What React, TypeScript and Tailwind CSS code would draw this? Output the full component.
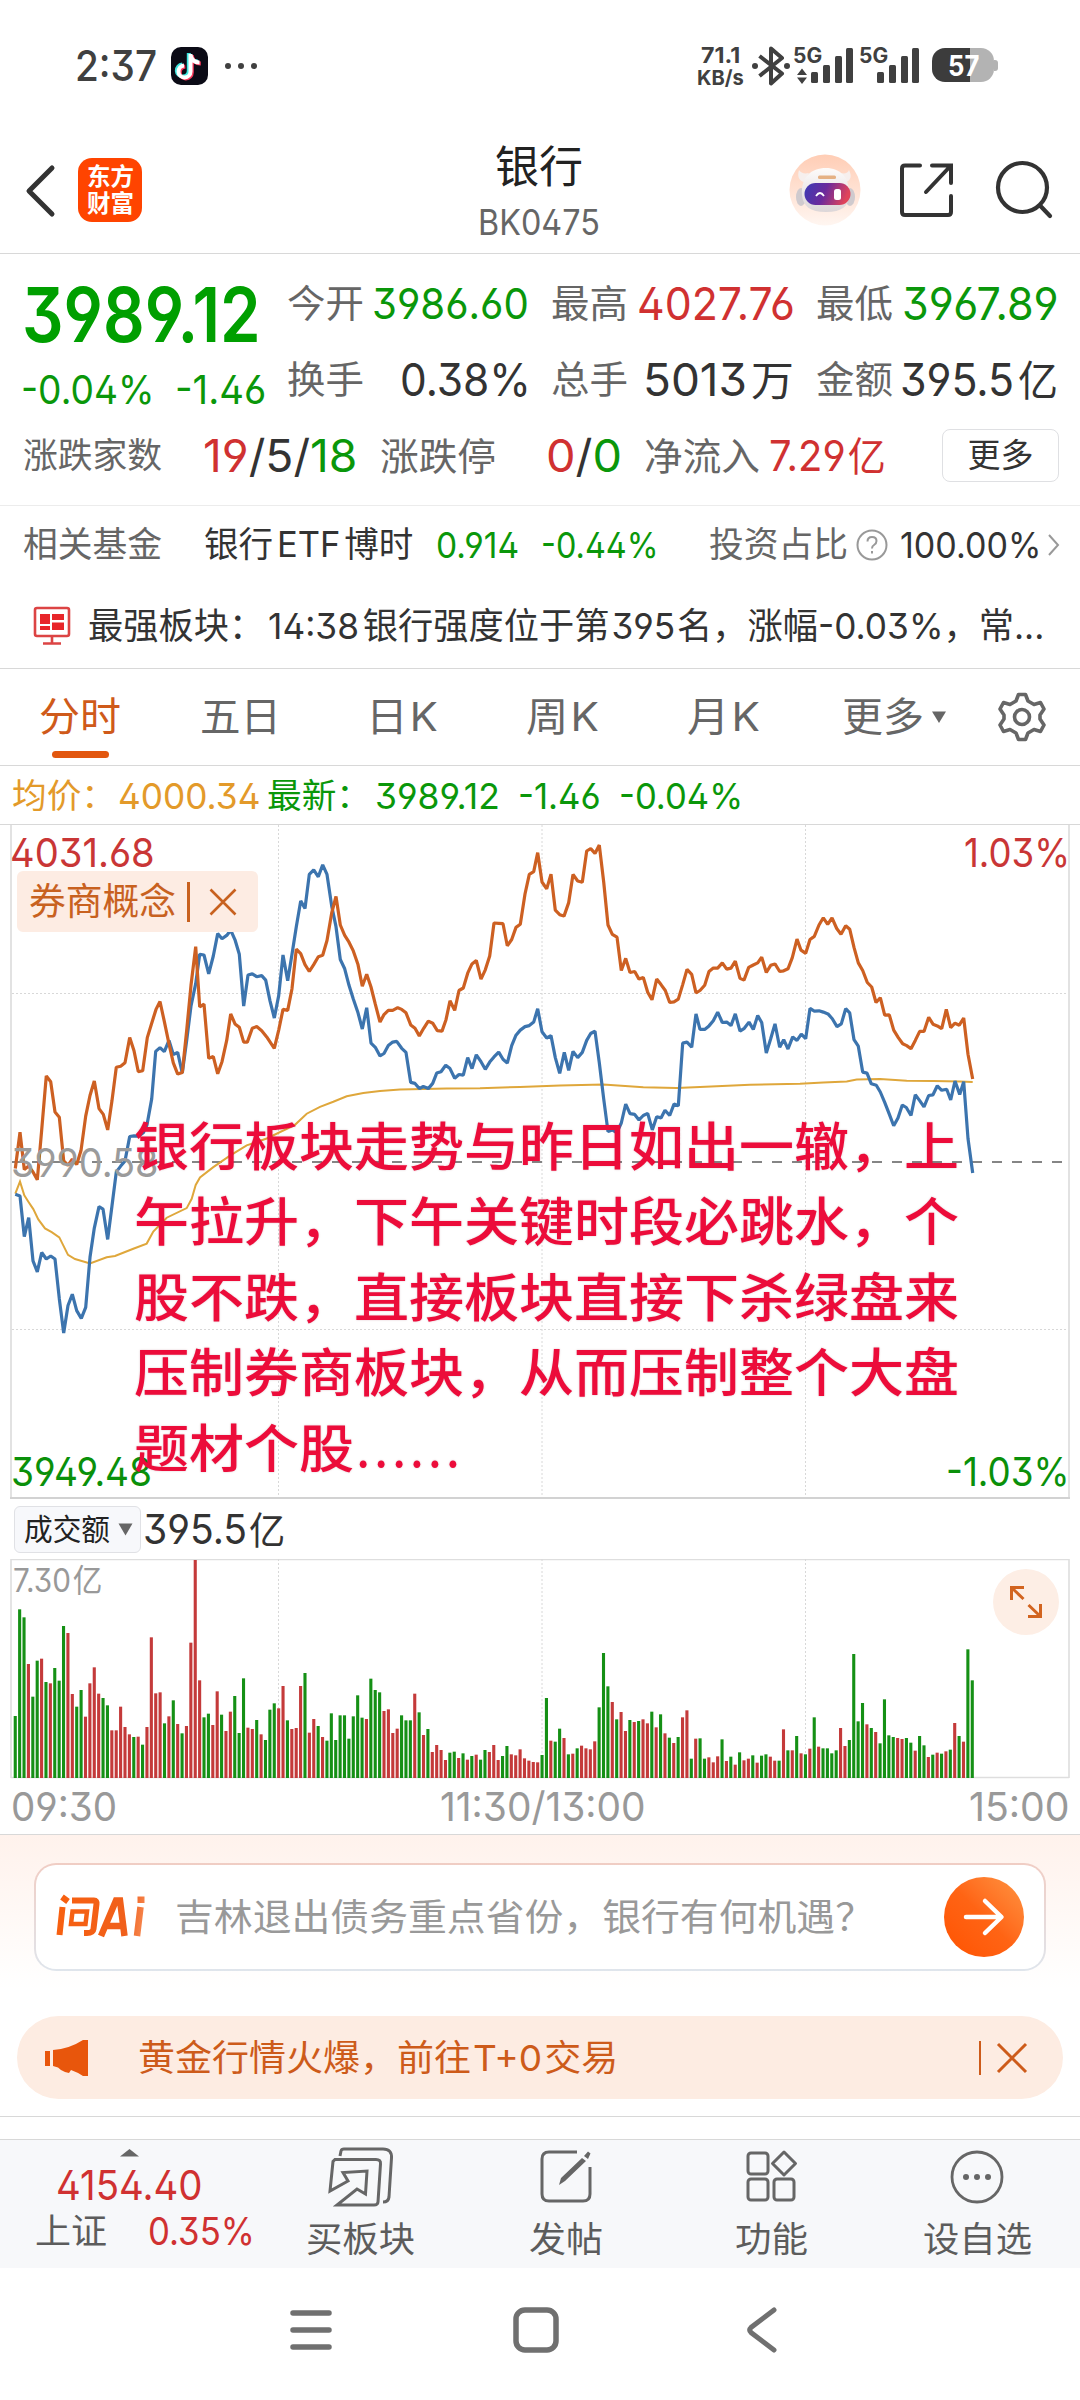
import { useLayoutEffect, useRef, type ReactNode } from "react";

/* Text squeezed or stretched horizontally so that it fills its box exactly. */
function Fit({ className, children }: { className: string; children: ReactNode }) {
  const box = useRef<HTMLSpanElement>(null);
  const text = useRef<HTMLSpanElement>(null);
  useLayoutEffect(() => {
    if (box.current && text.current) {
      const k = box.current.clientWidth / text.current.offsetWidth;
      text.current.style.transform = `scaleX(${k})`;
    }
  });
  return (
    <span ref={box} className={"block shrink-0 leading-none " + className}>
      <span ref={text} className="inline-block origin-left whitespace-nowrap align-top leading-none">
        {children}
      </span>
    </span>
  );
}

const BARS =
  "g1128 g808 g832 r972 g1070 g962 r956 g1026 r1030 g984 g1022 g858 r879 r1062 g1100 g1050 r1130 r1030 r982 r1061 g1074 g1096 r1171 r1171 r1100 r1161 r1183 g1191 r1190 g1214 r1161 r892 r1060 r1057 g1150 r1129 g1081 r1152 g1180 r1158 r908 r660 r1021 g1132 g1121 r1155 r1054 g1124 r1173 r1115 g1068 g1179 g1015 r1163 r1167 g1140 r1183 g1200 g1109 g1090 r1105 r1038 g1141 r1167 r1164 r1038 g999 r1178 r1137 g1158 r1191 g1202 g1120 g1200 g1126 g1126 g1196 g1129 g1066 g1133 r1137 g1016 g1050 g1057 r1113 r1108 r1179 r1166 g1126 g1141 g1141 r1061 g1117 r1185 g1167 r1236 r1215 r1230 r1260 g1238 g1235 r1254 g1240 r1259 g1248 r1244 g1259 g1230 r1236 r1215 r1260 g1248 g1218 r1243 r1246 r1228 r1255 r1262 r1266 r1267 " +
  "g1245 g1074 r1202 g1205 g1166 r1194 g1243 r1241 g1225 r1217 r1225 r1228 r1204 g1102 g939 g1039 r1086 g1138 r1116 r1173 g1140 r1146 g1143 r1138 r1150 g1115 r1162 g1123 r1180 g1193 r1209 g1191 r1132 r1111 g1256 r1196 g1195 g1256 r1252 r1267 r1249 g1198 r1263 g1250 r1274 g1237 r1261 r1256 g1246 r1268 g1247 g1243 r1250 r1262 g1262 r1168 g1231 r1231 g1188 r1240 g1243 r1226 g1132 r1220 g1225 g1225 g1240 g1231 r1164 r1218 g1200 g942 g1144 g1089 r1153 g1164 r1176 g1210 g1078 g1186 g1191 r1194 r1197 g1194 g1208 r1232 g1188 g1216 r1251 g1244 r1238 g1241 r1234 g1229 r1149 g1188 r1205 g928 g1021";

const BLUE: [number, string][] = [
  [0, "46,1087 60,1092 73,1210 86,1155 99,1280 112,1312 125,1256 139,1275 152,1266 165,1275 178,1390 191,1490 204,1410 217,1377 230,1425 244,1447 257,1415 270,1270 283,1185 297,1123 309,1130 323,1218 336,1120 349,1022 362,1005 375,990 389,919 402,917 415,918 430,908 441,885 455,810 467,672 480,661 493,673 507,640 520,681 533,675 547,735 560,640 573,540 587,475 599,390 612,392 626,447 640,395 653,330 666,345 680,335 692,320 705,348 718,390 731,540 744,450 757,447 770,455 785,452 797,465 810,525 823,575 836,510 849,392 863,467 876,390 889,310 902,235 915,257 928,158 941,145 955,165 968,130 981,158 995,250 1008,310 1021,405 1034,432 1047,480 1060,520 1074,560 1087,607 1100,545"],
  [1080, "33,648 46,660 60,685 72,678 85,655 98,645 110,643 125,663 138,675 152,762 165,765 178,780 190,774 205,780 218,765 230,735 243,731 257,712 270,722 284,750 297,739 310,741 323,690 336,722 349,682 363,702 376,724 389,703 402,688 416,674 429,695 442,706 455,655 468,625 481,610 495,600 508,597 521,587 533,548 546,615 560,633 573,626 586,690 599,736 613,675 626,727 639,672 653,690 667,675 680,640 692,620 705,613 718,705 731,810 744,905 757,900 770,908 784,880 797,825 810,853 824,855 837,871 850,858 863,852 877,900 890,862 903,865 915,843 929,858 942,825 955,830 968,648 981,645 995,660 1008,563"],
  [2100, "0,608 14,608 27,598 40,583 53,558 67,588 80,587 93,597 106,563 120,613 133,605 147,587 160,608 173,568 185,588 199,677 212,635 225,592 239,660 251,638 264,665 278,630 291,640 304,622 317,635 330,547 343,555 357,554 370,558 384,563 397,577 411,600 424,592 437,548 449,560 462,638 475,657 488,732 501,735 514,766 529,770 541,790 554,820 567,852 581,888 594,865 607,828 619,835 633,858 646,798 659,815 672,833 686,800 699,798 712,772 725,785 740,782 752,813 765,758 779,797 791,760 804,925 818,1025"],
];

const ORANGE: [number, string][] = [
  [0, "46,1012 60,907 73,1015 86,1005 99,1022 112,1045 125,900 139,743 152,760 165,848 178,863 191,990 204,1003 217,985 230,1000 243,960 257,860 270,800 283,758 297,838 310,855 323,900 336,815 349,718 362,715 375,705 389,632 402,670 415,731 428,728 442,632 455,590 468,550 480,527 493,585 507,650 520,705 533,738 547,733 560,610 573,480 587,368 599,543 612,535 626,692 640,687 653,737 666,702 680,640 692,563 705,592 718,602 731,645 742,645 757,605 770,600 785,612 800,630 823,663 836,610 849,550 863,553 876,490 889,375 902,388 915,420 928,440 941,420 955,397 968,393 981,350 995,270 1008,222 1021,305 1034,335 1047,355 1060,380 1074,420 1087,483 1100,448 1113,485 1126,535 1140,587"],
  [1080, "72,565 85,553 98,553 113,545 125,550 138,560 152,595 165,605 178,627 191,605 205,584 218,590 232,612 246,613 258,580 270,525 284,553 297,495 310,488 323,445 336,418 349,408 363,462 376,435 389,395 402,299 416,300 429,301 442,365 455,347 468,312 481,303 495,215 508,158 521,150 533,95 546,180 560,200 573,157 586,262 599,275 612,279 626,240 639,158 653,177 667,181 680,90 692,83 705,97 718,73 731,180 744,305 757,332 771,340 784,437 797,402 810,443 824,440 837,462 850,457 863,500 876,522 890,462 903,478 916,495 929,530 942,528 955,520 968,478 981,434 995,448 1008,502"],
  [2100, "0,495 14,480 27,440 40,430 53,430 67,415 80,433 93,430 106,410 120,460 132,465 146,428 160,421 173,415 185,398 199,443 212,422 225,418 239,440 251,438 264,432 277,400 291,346 303,378 317,387 330,347 343,338 357,305 370,284 383,303 396,284 410,315 423,332 437,307 449,317 462,370 475,415 488,437 502,472 515,485 528,530 541,516 554,567 568,566 581,610 595,632 608,650 620,655 633,664 646,640 659,614 672,614 686,573 699,593 712,598 725,606 739,550 752,603 765,590 778,596 791,575 804,680 818,752"],
];

const YELLOW: [number, string][] = [
  [0, "46,1085 60,1050 73,1090 86,1110 100,1130 115,1160 135,1186 155,1197 178,1212 204,1263 225,1275 270,1288 320,1270 345,1266 400,1245 440,1230 460,1195 500,1155 560,1127 575,1100 587,1060 600,1038 640,1008 690,975 740,945 800,925 885,885 920,853 960,833 1000,818 1040,802 1090,793 1140,787 1200,783"],
  [1080, "260,780 360,779 480,775 600,771 730,768 850,776 950,778"],
  [2100, "0,775 150,769 300,766 370,762 440,759 470,754 540,752 620,757 700,758 780,759 818,761"],
];

function toPoints(series: [number, string][]) {
  return series
    .flatMap(([dx, s]) =>
      s.split(" ").map((p) => {
        const [x, y] = p.split(",").map(Number);
        return `${((x + dx) / 3).toFixed(1)},${(y / 2.904 - 5).toFixed(1)}`;
      }),
    )
    .join(" ");
}

const GRID_X = [278.5, 542, 805.5];

function PriceChart() {
  return (
    <svg className="absolute inset-0" width="1080" height="675" viewBox="0 0 1080 675" fill="none">
      <g stroke="#d8d8d8" strokeDasharray="2 2">
        {GRID_X.map((x) => (
          <line key={x} x1={x} x2={x} y1="0" y2="673" />
        ))}
        <line x1="12" x2="1068" y1="168.500" y2="168.500" />
        <line x1="12" x2="1068" y1="504.500" y2="504.500" />
      </g>
      <path d="M11 0V673M1069 0V673" stroke="#e2e2e2" strokeWidth="2" />
      <path d="M10 673H1070" stroke="#d2d2d2" strokeWidth="2" />
      <path d="M12 337H1062" stroke="#858585" strokeWidth="2" strokeDasharray="10 10" />
      <polyline points={toPoints(YELLOW)} stroke="#dfa73b" strokeWidth="2" />
      <polyline points={toPoints(BLUE)} stroke="#3c74ae" strokeWidth="3.200" strokeLinejoin="bevel" />
      <polyline points={toPoints(ORANGE)} stroke="#cd6022" strokeWidth="3.200" strokeLinejoin="bevel" />
    </svg>
  );
}

function VolumeChart() {
  return (
    <svg className="absolute inset-0" width="1080" height="220" viewBox="0 0 1080 220" fill="none">
      <path d="M11 0V219M1069 0V219M11 0.5H1069M11 218.5H1069" stroke="#dedede" strokeWidth="1.6" />
      <g stroke="#d8d8d8" strokeDasharray="2 2">
        {GRID_X.map((x) => (
          <line key={x} x1={x} x2={x} y1="0" y2="218" />
        ))}
      </g>
      {BARS.split(" ").map((b, i) => {
        const top = (Number(b.slice(1)) - 657) / 3;
        return (
          <rect
            key={i}
            x={13.7 + i * 4.39}
            y={top}
            width="3.1"
            height={219 - top}
            fill={b[0] === "g" ? "#159015" : "#c43a3a"}
          />
        );
      })}
    </svg>
  );
}

function StatusBar() {
  return (
    <div className="flex h-[132px] items-center text-[#404040]">
      <Fit className="ml-[75px] w-[82px] text-[42px] font-medium">2:37</Fit>
      <svg className="ml-[14px]" width="37" height="38" viewBox="0 0 37 38">
        <rect width="37" height="38" rx="10" fill="#0b0b16" />
        <g fill="none" strokeWidth="4" strokeLinecap="butt">
          <path d="M19 7V24.5A6 6 0 1 1 12.5 18.5M19 8C20 13 23 15.500 28 15.500" stroke="#3ee6e0" transform="translate(-1.200 -1)" />
          <path d="M19 7V24.500A6 6 0 1 1 12.500 18.500M19 8C20 13 23 15.500 28 15.500" stroke="#fb3a5d" transform="translate(1.800 1)" />
          <path d="M19 7V24.500A6 6 0 1 1 12.500 18.500M19 8C20 13 23 15.500 28 15.500" stroke="#fff" transform="translate(.5 0)" />
        </g>
      </svg>
      <div className="ml-[17px] flex gap-[7px]">
        <i className="size-[6px] rounded-full bg-[#404040]" />
        <i className="size-[6px] rounded-full bg-[#404040]" />
        <i className="size-[6px] rounded-full bg-[#404040]" />
      </div>
      <div className="ml-[440px] flex flex-col items-center gap-[2px] font-bold">
        <Fit className="w-[39px] text-[22px]">71.1</Fit>
        <Fit className="w-[47px] text-[20.500px]">KB/s</Fit>
      </div>
      <svg className="ml-[7px]" width="40" height="42" viewBox="0 0 40 42" fill="none" stroke="#404040" strokeWidth="4" strokeLinejoin="round">
        <path d="M8.500 11L31 28.500L20 38.500V3.500L31 13L8.500 31" />
        <g fill="#404040" stroke="none">
          <circle cx="4" cy="21" r="3" />
          <circle cx="36" cy="21" r="3" />
        </g>
      </svg>
      <div className="relative ml-[2px] h-[42px] w-[60px]">
        <Fit className="absolute left-0 top-0 w-[29px] text-[21px] font-bold">5G</Fit>
        <svg width="60" height="42" viewBox="0 0 60 42" fill="#404040">
          <path d="M9 23.500L14 30H4ZM9 39L4 32.500H14Z" />
          <rect x="18" y="27" width="7" height="11" rx="1.500" />
          <rect x="30" y="20" width="7" height="18" rx="1.500" />
          <rect x="42" y="11" width="7" height="27" rx="1.500" />
          <rect x="53" y="3" width="7" height="35" rx="1.500" />
        </svg>
      </div>
      <div className="relative ml-[6px] h-[42px] w-[61px]">
        <Fit className="absolute left-0 top-0 w-[29px] text-[21px] font-bold">5G</Fit>
        <svg width="61" height="42" viewBox="0 0 61 42" fill="#404040">
          <rect x="18" y="27" width="7" height="11" rx="1.500" />
          <rect x="30" y="20" width="7" height="18" rx="1.500" />
          <rect x="42" y="11" width="7" height="27" rx="1.500" />
          <rect x="53" y="3" width="7" height="35" rx="1.500" />
        </svg>
      </div>
      <div className="relative -top-[1px] ml-[12px] flex items-center">
        <div className="flex h-[34px] w-[62px] items-center justify-center overflow-hidden rounded-[13px] bg-[linear-gradient(90deg,#3c3c3c_62%,#b3b3b3_62%)]">
          <Fit className="w-[31px] text-[29px] font-bold text-white">57</Fit>
        </div>
        <i className="h-[11px] w-[4px] rounded-r-[3px] bg-[#b3b3b3]" />
      </div>
    </div>
  );
}

function Header() {
  return (
    <header className="flex h-[122px] items-start border-b border-[#d8d8d8]">
      <svg className="ml-[24px] mt-[31px]" width="34" height="56" viewBox="0 0 34 56" fill="none" stroke="#333" strokeWidth="5" strokeLinecap="round" strokeLinejoin="round">
        <path d="M28 5L5 28L28 51" />
      </svg>
      <div className="ml-[20px] mt-[26px] flex size-[64px] flex-col items-center justify-center gap-[3px] rounded-[14px] bg-[#ff4400] font-bold text-white">
        <Fit className="w-[47px] text-[24px]">东方</Fit>
        <Fit className="w-[47px] text-[24px]">财富</Fit>
      </div>
      <div className="ml-[321px] mt-[13px] flex w-[164px] flex-col items-center pr-[12px]">
        <Fit className="w-[88px] text-[44px] text-[#222]">银行</Fit>
        <Fit className="ml-[-1px] mt-[16px] w-[122px] text-[35px] text-[#666]">BK0475</Fit>
      </div>
      <svg className="ml-[162px] mt-[22px]" width="72" height="72" viewBox="0 0 72 72">
        <defs>
          <linearGradient id="halo" x1="0" y1="0" x2="0" y2="1">
            <stop offset="0" stopColor="#ffcdb5" />
            <stop offset="1" stopColor="#fff6f1" />
          </linearGradient>
          <linearGradient id="visor" x1="0" y1="0" x2="1" y2="0.2">
            <stop offset="0" stopColor="#3b3bb5" />
            <stop offset="0.5" stopColor="#6b2a9c" />
            <stop offset="1" stopColor="#e0435a" />
          </linearGradient>
          <linearGradient id="shell" x1="0" y1="0" x2="0" y2="1">
            <stop offset="0" stopColor="#fdfbfa" />
            <stop offset="1" stopColor="#dcd6d8" />
          </linearGradient>
        </defs>
        <circle cx="36" cy="36" r="35.500" fill="url(#halo)" />
        <path d="M10 16C8 22 10 27 15 28L20 19C15 20 12 19 10 16ZM60 16C63 22 62 26 57 28L52 19C56 20 59 19 60 16Z" fill="#f6efed" />
        <ellipse cx="12" cy="43" rx="5" ry="9" fill="#cfcace" />
        <ellipse cx="61" cy="43" rx="5" ry="9" fill="#cfcace" />
        <path d="M13 41C12 23 22 14 37 14C51 14 61 23 60 41C60 52 53 58 37 58C21 58 14 52 13 41Z" fill="url(#shell)" />
        <rect x="29" y="21.500" width="18" height="3.500" rx="1.500" fill="#e5b184" />
        <rect x="15.500" y="29" width="46" height="22" rx="11" fill="url(#visor)" />
        <path d="M27 42Q31 36 35 42" fill="none" stroke="#fff" strokeWidth="1.800" />
        <rect x="45" y="35" width="7" height="11" rx="2.500" fill="#fff" />
      </svg>
      <svg className="ml-[37px] mt-[29px]" width="58" height="58" viewBox="0 0 58 58" fill="none" stroke="#333" strokeWidth="4" strokeLinecap="round">
        <path d="M22 4.500H7Q4 4.500 4 7.500V51Q4 54 7 54H50Q53 54 53 51V35M34 4.500H53V22M52 5.500L28 31" />
      </svg>
      <svg className="ml-[38px] mt-[28px]" width="60" height="60" viewBox="0 0 60 60" fill="none" stroke="#333" strokeWidth="4.200" strokeLinecap="round">
        <circle cx="28.500" cy="27.500" r="24.500" />
        <path d="M46 45.500L56 56" />
      </svg>
    </header>
  );
}

function Quote() {
  return (
    <section className="border-b border-[#ececec] pb-[11px] pt-[11px] text-[#666]">
      <div className="flex">
        <div className="w-[287px] text-[#0a970a]">
          <div className="flex h-[88px] items-center pt-[10px]">
            <Fit className="ml-[22px] w-[239px] text-[75px] font-semibold text-[#009f00]">3989.12</Fit>
          </div>
          <div className="flex h-[64px] items-center pt-[10px]">
            <Fit className="ml-[21px] w-[133px] text-[40px]">-0.04%</Fit>
            <Fit className="ml-[21px] w-[91px] text-[40px]">-1.46</Fit>
          </div>
        </div>
        <div>
          <div className="flex h-[76px] items-center">
            <Fit className="w-[77px] text-[38px]">今开</Fit>
            <Fit className="ml-[8px] w-[157px] text-[43px] text-[#0a970a]">3986.60</Fit>
            <Fit className="ml-[22px] w-[77px] text-[38px]">最高</Fit>
            <Fit className="ml-[9px] w-[158px] text-[45px] text-[#d03131]">4027.76</Fit>
            <Fit className="ml-[21px] w-[77px] text-[38px]">最低</Fit>
            <Fit className="ml-[9px] w-[157px] text-[45px] text-[#0a970a]">3967.89</Fit>
          </div>
          <div className="flex h-[76px] items-center">
            <Fit className="w-[77px] text-[38px]">换手</Fit>
            <Fit className="ml-[36px] w-[131px] text-[45px] text-[#333]">0.38%</Fit>
            <Fit className="ml-[20px] w-[77px] text-[38px]">总手</Fit>
            <Fit className="ml-[15px] w-[151px] text-[45px] text-[#333]">5013<span className="ml-1 text-[42px]">万</span></Fit>
            <Fit className="ml-[22px] w-[77px] text-[38px]">金额</Fit>
            <Fit className="ml-[7px] w-[158px] text-[45px] text-[#333]">395.5<span className="ml-1 text-[42px]">亿</span></Fit>
          </div>
        </div>
      </div>
      <div className="flex h-[77px] items-center">
        <Fit className="ml-[23px] w-[139px] text-[35px]">涨跌家数</Fit>
        <Fit className="ml-[41px] w-[154px] text-[45px] text-[#333]">
          <span className="text-[#d03131]">19</span>/5/<span className="text-[#0a970a]">18</span>
        </Fit>
        <Fit className="ml-[23px] w-[116px] text-[38px]">涨跌停</Fit>
        <Fit className="ml-[50px] w-[76px] text-[45px] text-[#333]">
          <span className="text-[#d03131]">0</span>/<span className="text-[#0a970a]">0</span>
        </Fit>
        <Fit className="ml-[22px] w-[116px] text-[38px]">净流入</Fit>
        <Fit className="ml-[9px] w-[117px] text-[42px] text-[#d03131]">7.29<span className="ml-0.5 text-[40px]">亿</span></Fit>
        <div className="ml-[56px] flex h-[53px] w-[117px] items-center justify-center rounded-lg border border-[#dfe0e3] text-[#333]">
          <Fit className="w-[66px] text-[33px]">更多</Fit>
        </div>
      </div>
    </section>
  );
}

function FundAndNews() {
  return (
    <section className="border-b border-[#d8d8d8] text-[#333]">
      <div className="flex h-[77px] items-center">
        <Fit className="ml-[23px] w-[139px] text-[35px] text-[#666]">相关基金</Fit>
        <Fit className="ml-[42px] w-[209px] text-[35px]">银行<span className="mx-1">ETF</span>博时</Fit>
        <Fit className="ml-[23px] w-[83px] text-[36px] text-[#0a970a]">0.914</Fit>
        <Fit className="ml-[22px] w-[118px] text-[36px] text-[#0a970a]">-0.44%</Fit>
        <Fit className="ml-[50px] w-[139px] text-[35px] text-[#666]">投资占比</Fit>
        <svg className="ml-[8px]" width="32" height="32" viewBox="0 0 32 32" fill="none" stroke="#999" strokeWidth="2">
          <circle cx="16" cy="16" r="14.500" />
          <path d="M11.500 12.500Q11.500 8 16 8Q20.500 8 20.500 12Q20.500 14.500 18 16Q16 17.200 16 19.500M16 22V24.500" />
        </svg>
        <Fit className="ml-[12px] w-[141px] text-[36px]">100.00%</Fit>
        <svg className="ml-[6px]" width="14" height="24" viewBox="0 0 14 24" fill="none" stroke="#999" strokeWidth="2">
          <path d="M2 2L11 12L2 22" />
        </svg>
      </div>
      <div className="flex h-[85px] items-center">
        <svg className="ml-[33px]" width="38" height="40" viewBox="0 0 38 40" fill="none" stroke="#dc4444" strokeWidth="2.600">
          <rect x="2" y="2" width="34" height="28" rx="2" />
          <path d="M19 30V37M10 37.500H28" />
          <path d="M7 8H17V18H7ZM19 8H31V14H19ZM7 20H17V24H7ZM19 16.500H31V24H19Z" fill="#e8262a" stroke="none" />
        </svg>
        <Fit className="ml-[17px] w-[956px] text-[36px]">
          最强板块：<span className="mx-1">14:38</span>银行强度位于第<span className="mx-0.5">395</span>名，涨幅-0.03%，常...
        </Fit>
      </div>
    </section>
  );
}

function Tabs() {
  return (
    <nav className="relative flex h-[97px] items-center border-b border-[#d8d8d8] text-[40px] text-[#666]">
      <Fit className="ml-[39px] w-[82px] text-[#cf5a1a]">分时</Fit>
      <Fit className="ml-[79px] w-[81px]">五日</Fit>
      <Fit className="ml-[85px] w-[72px]">日<span className="ml-0.5">K</span></Fit>
      <Fit className="ml-[88px] w-[73px]">周<span className="ml-0.5">K</span></Fit>
      <Fit className="ml-[88px] w-[73px]">月<span className="ml-0.5">K</span></Fit>
      <Fit className="ml-[82px] w-[82px]">更多</Fit>
      <svg className="ml-[7px]" width="16" height="14" viewBox="0 0 16 14" fill="#666">
        <path d="M1 1.500H15L8 13Z" />
      </svg>
      <svg className="ml-[49px]" width="52" height="52" viewBox="0 0 52 52" fill="none" stroke="#666" strokeWidth="3.600" strokeLinejoin="round">
        <path d="M22.500 3.500H29.500L32 10L38 13.500L44.500 11.500L48 18L44 24V28L48 34L44.500 40.500L38 38.500L32 42L29.500 48.500H22.500L20 42L14 38.500L7.500 40.500L4 34L8 28V24L4 18L7.500 11.500L14 13.500L20 10Z" />
        <circle cx="26" cy="26" r="7.500" />
      </svg>
      <i className="absolute bottom-[7px] left-[52px] h-[7px] w-[57px] rounded-full bg-[#e2570f]" />
    </nav>
  );
}

const NOTE = [
  "银行板块走势与昨日如出一辙，上",
  "午拉升，下午关键时段必跳水，个",
  "股不跌，直接板块直接下杀绿盘来",
  "压制券商板块，从而压制整个大盘",
];

function Charts() {
  return (
    <section className="border-b border-[#d8d8d8]">
      <div className="flex h-[58px] items-center pt-[2px] text-[36px] text-[#0a970a]">
        <Fit className="ml-[12px] w-[104px] text-[34px] text-[#e39a2a]">均价：</Fit>
        <Fit className="ml-[2px] w-[142px] text-[#e39a2a]">4000.34</Fit>
        <Fit className="ml-[7px] w-[104px] text-[34px]">最新：</Fit>
        <Fit className="ml-[4px] w-[125px]">3989.12</Fit>
        <Fit className="ml-[18px] w-[83px]">-1.46</Fit>
        <Fit className="ml-[18px] w-[124px]">-0.04%</Fit>
      </div>
      <div className="relative h-[675px] border-t border-[#d8d8d8]">
        <PriceChart />
        <Fit className="absolute left-[10px] top-[8px] w-[145px] text-[40px] text-[#c93636]">4031.68</Fit>
        <Fit className="absolute right-[10px] top-[8px] w-[106px] text-[40px] text-[#c93636]">1.03%</Fit>
        <Fit className="absolute left-[11px] top-[318px] w-[148px] text-[40px] text-[#9b9b9b]">3990.58</Fit>
        <Fit className="absolute left-[11px] top-[627px] w-[141px] text-[40px] text-[#0a900a]">3949.48</Fit>
        <Fit className="absolute right-[10px] top-[627px] w-[124px] text-[40px] text-[#0a900a]">-1.03%</Fit>
        <div className="absolute left-[17px] top-[46px] flex h-[61px] w-[241px] items-center rounded-md bg-[#fdece3] text-[#c8611f]">
          <Fit className="ml-[12px] w-[147px] text-[37px]">券商概念</Fit>
          <i className="ml-[11px] h-[40px] w-[3px] bg-[#c8611f]" />
          <svg className="ml-[19px]" width="28" height="28" viewBox="0 0 28 28" stroke="#c8611f" strokeWidth="2.600">
            <path d="M1.500 1.500L26.500 26.500M26.500 1.500L1.500 26.500" />
          </svg>
        </div>
        <div className="absolute left-[134px] top-[285px] flex flex-col text-[52px] font-medium text-[#ec0c3a] [text-shadow:0_0_2px_rgba(120,0,40,.25)]">
          {NOTE.map((line) => (
            <div key={line} className="flex h-[75.500px] items-center">
              <Fit className="w-[825px]">{line}</Fit>
            </div>
          ))}
          <div className="flex h-[75.500px] items-center">
            <Fit className="w-[220px]">题材个股</Fit>
            <Fit className="ml-[2px] w-[108px] tracking-[4px]">......</Fit>
          </div>
        </div>
      </div>
      <div className="flex h-[60px] items-center">
        <div className="ml-[14px] flex h-[47px] w-[127px] items-center rounded-md border border-[#e0e1e5] bg-[#f7f8fb] text-[#222]">
          <Fit className="ml-[9px] w-[86px] text-[30px]">成交额</Fit>
          <svg className="ml-[8px]" width="15" height="13" viewBox="0 0 15 13" fill="#666">
            <path d="M0.500 0.500H14.500L7.500 12.500Z" />
          </svg>
        </div>
        <Fit className="ml-[2px] w-[142px] text-[41px] text-[#333]">395.5<span className="ml-0.5 text-[38px]">亿</span></Fit>
      </div>
      <div className="relative h-[220px]">
        <VolumeChart />
        <Fit className="absolute left-[13px] top-[6px] w-[90px] text-[32px] text-[#999]">7.30<span className="ml-0.5">亿</span></Fit>
        <div className="absolute left-[993px] top-[10px] flex size-[66px] items-center justify-center rounded-full bg-[#fdeee5]">
          <svg width="34" height="34" viewBox="0 0 34 34" fill="none" stroke="#d2641f" strokeWidth="3">
            <path d="M15 2.500H2.500V15M3 3L14.500 14M19 31.500H31.500V19M31 31L19.500 20" />
          </svg>
        </div>
      </div>
      <div className="flex h-[55px] items-center text-[40px] text-[#999]">
        <Fit className="ml-[11px] w-[106px]">09:30</Fit>
        <Fit className="ml-[323px] w-[206px]">11:30/13:00</Fit>
        <Fit className="ml-[323px] w-[101px]">15:00</Fit>
      </div>
    </section>
  );
}

function AskAi() {
  return (
    <section className="h-[181px] bg-gradient-to-b from-[#fff2ec] to-white to-85% px-[34px] pt-[28px]">
      <div className="rounded-[22px] bg-gradient-to-b from-[#f0cdc4] to-[#dfe5ec] p-[2px]">
        <div className="flex h-[104px] items-center rounded-[20px] bg-white">
          <svg className="ml-[17px]" width="98" height="48" viewBox="0 0 98 48" fill="none" stroke="url(#ask)" strokeWidth="6">
            <defs>
              <linearGradient id="ask" gradientUnits="userSpaceOnUse" x1="0" y1="20" x2="98" y2="36">
                <stop offset="0" stopColor="#f8600f" />
                <stop offset="0.75" stopColor="#f0601c" />
                <stop offset="1" stopColor="#f99a68" />
              </linearGradient>
            </defs>
            <path d="M9 4L15 8.500M9.500 14L6.500 42M19 7.500H41Q44 7.500 43.500 11L40.500 36Q40 40 34 40H31" />
            <path d="M19.500 18.500H34L32.500 31H18Z" strokeWidth="4.500" />
            <path d="M48 43L63 7.500H67L71.500 43M54 33H70M87.500 14L84 43" strokeWidth="6.500" />
            <path d="M88 3.500V10" strokeWidth="7" />
          </svg>
          <Fit className="ml-[24px] w-[699px] text-[37px] text-[#999]">吉林退出债务重点省份，银行有何机遇？</Fit>
          <div className="ml-[70px] flex size-[80px] items-center justify-center rounded-full bg-gradient-to-bl from-[#ff9440] via-[#ff6414] to-[#ff5200]">
            <svg width="44" height="40" viewBox="0 0 44 40" fill="none" stroke="#fff" strokeWidth="4.500" strokeLinecap="round" strokeLinejoin="round">
              <path d="M4 20H39M23 4L39.500 20L23 36" />
            </svg>
          </div>
        </div>
      </div>
    </section>
  );
}

function Banner() {
  return (
    <section className="h-[101px] border-b border-[#d8d8d8] text-[#cd5b1a]">
      <div className="mx-[17px] flex h-[83px] items-center rounded-full bg-[#fdece2]">
        <svg className="ml-[28px]" width="44" height="38" viewBox="0 0 44 38" fill="#e8560c">
          <path d="M0 12H5V27H0ZM8 11Q24 10 38 1H43V37H38Q33 33.500 26 31L24 34L20 33L16 31L13 28.500L8 27Z" />
        </svg>
        <Fit className="ml-[49px] w-[480px] text-[36px]">黄金行情火爆，前往<span className="mx-0.5">T+0</span>交易</Fit>
        <i className="ml-[361px] h-[34px] w-[1.500px] bg-[#cd5b1a]" />
        <svg className="ml-[15px]" width="32" height="32" viewBox="0 0 32 32" stroke="#cd5b1a" strokeWidth="3">
          <path d="M2 2L30 30M30 2L2 30" />
        </svg>
      </div>
    </section>
  );
}

function BottomBar() {
  return (
    <footer className="mt-[22px] flex h-[129px] border-t border-[#d8d8d8] bg-[#f7f8fa] text-[#5c5c5c]">
      <div className="w-[256px] text-[#d03131]">
        <svg className="ml-[120px] mt-[9px]" width="19" height="8" viewBox="0 0 19 8" fill="#666">
          <path d="M0 7.500L9.500 0L19 7.500Z" />
        </svg>
        <Fit className="ml-[56px] mt-[8px] w-[147px] text-[41px]">4154.40</Fit>
        <div className="mt-[6px] flex items-center">
          <Fit className="ml-[35px] w-[72px] text-[35px] text-[#5c5c5c]">上证</Fit>
          <Fit className="ml-[41px] w-[107px] text-[38px]">0.35%</Fit>
        </div>
      </div>
      <div className="ml-[49px] flex w-[111px] flex-col items-center pt-[7px]">
        <svg width="66" height="60" viewBox="0 0 66 60" fill="none" stroke="#666" strokeWidth="3">
          <path d="M12 9L13 4Q13.500 2 16 2H55Q64 2 63.500 11L61 50Q60.500 55 55 55M7 12.500H48Q53 12.500 52.500 17L50 55Q49.800 58 46 58H9L29 42L37.500 47L39 24L15 25.500L20 34L2 44L5 14.500Z" />
        </svg>
        <Fit className="mt-[15px] w-[109px] text-[35px]">买板块</Fit>
      </div>
      <div className="ml-[95px] flex w-[110px] flex-col items-center pt-[7px]">
        <svg width="54" height="60" viewBox="0 0 54 60" fill="none" stroke="#666" strokeWidth="3">
          <path d="M38 5H10Q3 5 3 12V47Q3 54 10 54H44Q51 54 51 47V20" />
          <path d="M20 38L22 31L43 11L47 14L26 34ZM45 9L49 4.500L51.500 6.500L49 12Z" fill="#666" stroke="none" />
        </svg>
        <Fit className="mt-[15px] w-[74px] text-[35px]">发帖</Fit>
      </div>
      <div className="ml-[95px] flex w-[110px] flex-col items-center pt-[7px]">
        <svg width="54" height="60" viewBox="0 0 54 60" fill="none" stroke="#666" strokeWidth="3" strokeLinejoin="round">
          <rect x="4" y="6" width="20" height="21" rx="3" />
          <rect x="4" y="32" width="20" height="21" rx="3" />
          <rect x="30" y="32" width="20" height="21" rx="3" />
          <path d="M40 5L51.500 16.500L40 28L28.500 16.500Z" />
        </svg>
        <Fit className="mt-[15px] w-[73px] text-[35px]">功能</Fit>
      </div>
      <div className="ml-[96px] flex w-[110px] flex-col items-center pt-[7px]">
        <svg width="54" height="60" viewBox="0 0 54 60" fill="none" stroke="#666" strokeWidth="2.800">
          <circle cx="27" cy="30" r="25" />
          <g fill="#666" stroke="none">
            <circle cx="16" cy="30" r="3" />
            <circle cx="27" cy="30" r="3" />
            <circle cx="38" cy="30" r="3" />
          </g>
        </svg>
        <Fit className="mt-[15px] w-[109px] text-[35px]">设自选</Fit>
      </div>
    </footer>
  );
}

function SystemNav() {
  return (
    <div className="flex h-[132px] items-start pt-[38px]">
      <svg className="ml-[288px]" width="46" height="48" viewBox="0 0 46 48" stroke="#707070" strokeWidth="5.500" strokeLinecap="round">
        <path d="M5 7H41M5 24H41M5 41H41" />
      </svg>
      <svg className="ml-[178px]" width="48" height="48" viewBox="0 0 48 48" fill="none" stroke="#707070" strokeWidth="5.500">
        <rect x="4" y="4" width="40" height="40" rx="9" />
      </svg>
      <svg className="ml-[185px]" width="34" height="48" viewBox="0 0 34 48" fill="none" stroke="#707070" strokeWidth="5" strokeLinecap="round">
        <path d="M29 4L6 21.500Q3.500 24 6 26.500L29 44" />
      </svg>
    </div>
  );
}

export default function App() {
  return (
    <div className="h-[2400px] w-[1080px] overflow-hidden bg-white font-['Inter','Noto_Sans_CJK_SC',sans-serif] [font-feature-settings:'cv09','ss01'] [&_svg]:shrink-0">
      <StatusBar />
      <Header />
      <Quote />
      <FundAndNews />
      <Tabs />
      <Charts />
      <AskAi />
      <Banner />
      <BottomBar />
      <SystemNav />
    </div>
  );
}
